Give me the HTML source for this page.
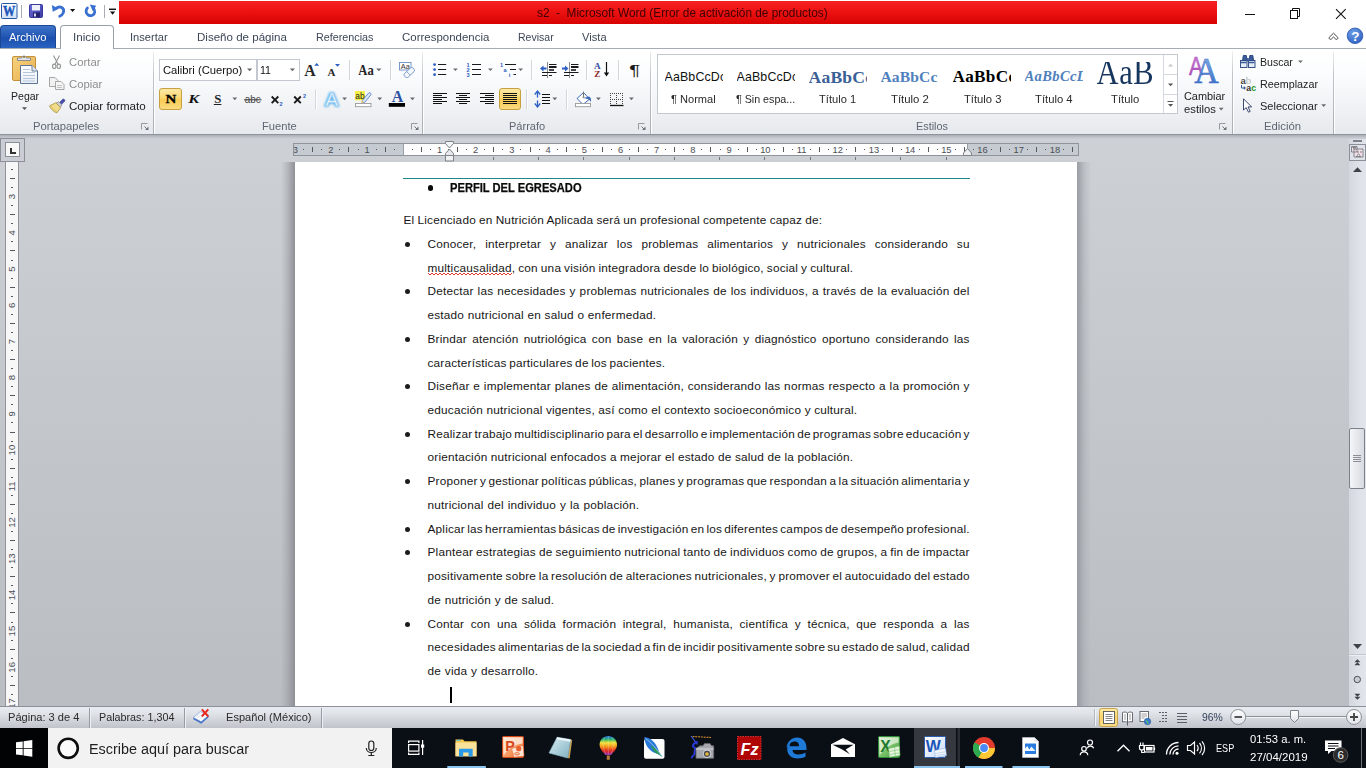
<!DOCTYPE html>
<html lang="es">
<head>
<meta charset="utf-8">
<title>s2 - Microsoft Word</title>
<style>
*{box-sizing:border-box;margin:0;padding:0}
html,body{width:1366px;height:768px;overflow:hidden;background:#fff}
body{font-family:"Liberation Sans",sans-serif;font-size:12px;color:#1e1e1e;position:relative}
.abs{position:absolute}
#ov{position:absolute;left:0;top:0;width:0;height:0;z-index:10}
.gi{position:absolute;top:60px;width:58.500px;height:26px;overflow:hidden;z-index:2}
.gi span{position:absolute;left:0;white-space:pre;line-height:1.2}
.L{position:absolute;white-space:pre;z-index:2;transform-origin:0 0}
svg{position:absolute;overflow:visible}
/* ---------- title bar ---------- */
#titlebar{position:absolute;left:0;top:0;width:1366px;height:25px;background:#fff}
#redband{position:absolute;left:119px;top:1px;width:1098px;height:23px;background:linear-gradient(#f52222,#ee1414 40%,#d80202 100%)}
#title{position:absolute;left:0;top:5px;width:1098px;text-align:center;font-size:12.5px;color:#6b0a0a;white-space:nowrap;letter-spacing:.05px}
/* ---------- tabs ---------- */
#tabs{position:absolute;left:0;top:25px;width:1366px;height:24px;background:#fff}
#tabs .t{position:absolute;top:5px;font-size:12.3px;color:#3a3a3a;white-space:nowrap}
#archivo{position:absolute;left:0;top:0;width:56px;height:23px;border-radius:4px 4px 0 0;background:linear-gradient(#3f74c8,#2458b4 45%,#1c50ae 55%,#2a63c0);border:1px solid #1a4796;border-bottom:none;color:#fff;font-size:12.3px;text-align:center;line-height:22px}
#inicio{position:absolute;left:60px;top:0;width:54px;height:24px;border:1px solid #98a0ab;border-bottom:none;border-radius:4px 4px 0 0;background:#fff;z-index:3}
/* ---------- ribbon ---------- */
#ribbon{position:absolute;left:0;top:48px;width:1366px;height:87px;background:linear-gradient(#ffffff 0,#fbfcfd 30%,#eef0f3 75%,#e6e9ed 100%);border-top:1px solid #a6acb6;border-bottom:1px solid #8f949c}
#ribshadow{position:absolute;left:0;top:135px;width:1366px;height:4px;background:linear-gradient(#a9adb4,#c2c6cc 60%,#cbcfd5)}
.gsep{position:absolute;top:2px;width:1px;height:83px;background:linear-gradient(rgba(190,194,200,.25),#c0c4ca 30%,#a9adb4 100%);box-shadow:1px 0 0 rgba(255,255,255,.95)}
.glabel{position:absolute;top:71px;font-size:12px;color:#6a6f78;text-align:center;white-space:nowrap}
.rt{position:absolute;font-size:12px;white-space:nowrap;color:#1e1e1e}
.dis{color:#8d8d8d}
/* ---------- doc area ---------- */
#docarea{position:absolute;left:0;top:139px;width:1349px;height:567px;background:linear-gradient(#cdd0d5,#c3c6cb 50%,#babdc2)}
#page{position:absolute;left:295px;top:162px;width:782px;height:544px;background:#fff}
#pshl{position:absolute;left:281px;top:162px;width:14px;height:544px;background:linear-gradient(90deg,rgba(140,144,150,0),rgba(140,144,150,.35) 45%,rgba(138,142,148,.95))}
#pshr{position:absolute;left:1077px;top:162px;width:14px;height:544px;background:linear-gradient(90deg,rgba(150,154,160,.95),rgba(160,164,170,.4) 50%,rgba(160,164,170,0))}
/* ---------- status bar ---------- */
#status{position:absolute;left:0;top:706px;width:1366px;height:22px;background:linear-gradient(#e8ebef 0,#e0e3e8 30%,#ced1d7 70%,#c0c3c9 100%);border-top:1px solid #8b909a}
#status .s{position:absolute;top:4px;font-size:12px;color:#2a2a2a;white-space:nowrap}
.ssep{position:absolute;top:1px;width:2px;height:20px;border-left:1px solid #979ba3;border-right:1px solid #eef0f3}
/* ---------- taskbar ---------- */
#taskbar{position:absolute;left:0;top:728px;width:1366px;height:40px;background:#0a0e15}
#search{position:absolute;left:48px;top:0;width:344px;height:40px;background:#f2f2f2}
#search .tx{position:absolute;left:40px;top:11px;font-size:15.5px;color:#222;white-space:nowrap}
.tray{position:absolute;color:#fff;font-size:12px;white-space:nowrap}
.ul{position:absolute;top:38px;height:2px;background:#76b9ed}
/* ---------- scrollbar ---------- */
#vscroll{position:absolute;left:1349px;top:139px;width:17px;height:567px;background:linear-gradient(90deg,#d3d7de,#dfe2e9 60%,#e1e4eb)}
/* ---------- document text ---------- */
.ln{position:absolute;font-size:11.8px;letter-spacing:.2px;line-height:16px;height:16px;color:#161616;white-space:pre;overflow:visible}
.bul{position:absolute;width:5px;height:5px;border-radius:50%;background:#1c1c1c}
.sq{}
#hd{position:absolute;left:450.3px;top:180px;-webkit-text-stroke:.25px #0a0a0a;font-size:12.3px;line-height:16px;font-weight:bold;color:#0a0a0a;white-space:pre;transform:scaleX(0.9070);transform-origin:0 0}
#teal{position:absolute;left:403px;top:178px;width:567px;height:1px;background:#1f8689}
#caret{position:absolute;left:450px;top:687px;width:2px;height:16px;background:#000}
</style>
</head>
<body>
<div id="titlebar">
  <div id="redband"></div>
</div>
<div id="tabs">
  <div id="archivo"></div>
  <div id="inicio"></div>
</div>
<div id="ribbon">
  <div class="gsep" style="left:153px"></div>
  <div class="gsep" style="left:422px"></div>
  <div class="gsep" style="left:650px"></div>
  <div class="gsep" style="left:1232px"></div>
  <div class="gsep" style="left:1333px"></div>
  <!--RIBBON-CONTENT-->
</div>
<div id="ribshadow"></div>
<div id="docarea"></div>
<div id="pshl"></div><div id="pshr"></div>
<div id="page"></div>
<!--RULERS-->
<svg id="hruler" style="left:0;top:139px" width="1349" height="24" viewBox="0 139 1349 24" font-family="'Liberation Sans',sans-serif" font-size="9.3" fill="#4b4f55">
<clipPath id="rc"><rect x="294" y="140" width="790" height="20"/></clipPath>
<rect x="293.5" y="143.5" width="785" height="12" fill="#c6cad1" stroke="#8f939a"/>
<rect x="404" y="144" width="563.5" height="11" fill="#fdfdfe"/>
<line x1="403.5" y1="144" x2="403.5" y2="155" stroke="#9a9ea5"/>
<line x1="967.5" y1="144" x2="967.5" y2="155" stroke="#9a9ea5"/>
<text x="295.3" y="153" text-anchor="middle" clip-path="url(#rc)">3</text>
<text x="330.9" y="153" text-anchor="middle">2</text>
<text x="367.1" y="153" text-anchor="middle">1</text>
<text x="439.5" y="153" text-anchor="middle">1</text>
<text x="475.7" y="153" text-anchor="middle">2</text>
<text x="511.9" y="153" text-anchor="middle">3</text>
<text x="548.1" y="153" text-anchor="middle">4</text>
<text x="584.3" y="153" text-anchor="middle">5</text>
<text x="620.5" y="153" text-anchor="middle">6</text>
<text x="656.7" y="153" text-anchor="middle">7</text>
<text x="692.9" y="153" text-anchor="middle">8</text>
<text x="729.1" y="153" text-anchor="middle">9</text>
<text x="765.3" y="153" text-anchor="middle">10</text>
<text x="801.5" y="153" text-anchor="middle">11</text>
<text x="837.7" y="153" text-anchor="middle">12</text>
<text x="873.9" y="153" text-anchor="middle">13</text>
<text x="910.1" y="153" text-anchor="middle">14</text>
<text x="946.3" y="153" text-anchor="middle">15</text>
<text x="982.5" y="153" text-anchor="middle">16</text>
<text x="1018.7" y="153" text-anchor="middle">17</text>
<text x="1054.9" y="153" text-anchor="middle">18</text>
<path d="M312.5 147v5M348.5 147v5M385.5 147v5M421.5 147v5M457.5 147v5M493.5 147v5M530.5 147v5M566.5 147v5M602.5 147v5M638.5 147v5M674.5 147v5M710.5 147v5M747.5 147v5M783.5 147v5M819.5 147v5M855.5 147v5M892.5 147v5M928.5 147v5M964.5 147v5M1000.5 147v5M1036.5 147v5M1072.5 147v5" stroke="#55595f" stroke-width="1" fill="none"/>
<path d="M303 149.5h1M321 149.5h1M339 149.5h1M358 149.5h1M376 149.5h1M394 149.5h1M412 149.5h1M430 149.5h1M448 149.5h1M466 149.5h1M484 149.5h1M502 149.5h1M520 149.5h1M539 149.5h1M557 149.5h1M575 149.5h1M593 149.5h1M611 149.5h1M629 149.5h1M647 149.5h1M665 149.5h1M683 149.5h1M701 149.5h1M720 149.5h1M738 149.5h1M756 149.5h1M774 149.5h1M792 149.5h1M810 149.5h1M828 149.5h1M846 149.5h1M864 149.5h1M882 149.5h1M901 149.5h1M919 149.5h1M937 149.5h1M955 149.5h1M973 149.5h1M991 149.5h1M1009 149.5h1M1027 149.5h1M1045 149.5h1M1063 149.5h1" stroke="#55595f" stroke-width="1" fill="none"/>
<path d="M493.5 157v3M538.5 157v3M583.5 157v3M629.5 157v3M674.5 157v3M719.5 157v3M764.5 157v3M810.5 157v3M855.5 157v3M900.5 157v3M946.5 157v3" stroke="#73777e" stroke-width="1" fill="none"/>
<g stroke="#7d8188" stroke-width="1" stroke-linejoin="round"><path d="M445.5 141.5h8v2l-4 4.5l-4-4.5z" fill="#f3f4f6"/><path d="M449.5 149l4 4.5v2h-8v-2z" fill="#e6e8eb"/><rect x="445.5" y="155.5" width="8" height="5.5" fill="#eef0f2"/><path d="M963.5 155.5v-2.5l4-4.5l4 4.5v2.5z" fill="#eceef0"/></g>
</svg>
<svg id="vruler" style="left:0;top:160px" width="24" height="546" viewBox="0 160 24 546" font-family="'Liberation Sans',sans-serif" font-size="9.6" fill="#4b4f55">
<rect x="5.5" y="155.5" width="13" height="560" fill="#f7f7f8" stroke="#8f939a"/>
<text transform="translate(15.4 196.7) rotate(-90)" text-anchor="middle">3</text>
<text transform="translate(15.4 232.9) rotate(-90)" text-anchor="middle">4</text>
<text transform="translate(15.4 269.1) rotate(-90)" text-anchor="middle">5</text>
<text transform="translate(15.4 305.3) rotate(-90)" text-anchor="middle">6</text>
<text transform="translate(15.4 341.5) rotate(-90)" text-anchor="middle">7</text>
<text transform="translate(15.4 377.7) rotate(-90)" text-anchor="middle">8</text>
<text transform="translate(15.4 413.9) rotate(-90)" text-anchor="middle">9</text>
<text transform="translate(15.4 450.1) rotate(-90)" text-anchor="middle">10</text>
<text transform="translate(15.4 486.3) rotate(-90)" text-anchor="middle">11</text>
<text transform="translate(15.4 522.5) rotate(-90)" text-anchor="middle">12</text>
<text transform="translate(15.4 558.7) rotate(-90)" text-anchor="middle">13</text>
<text transform="translate(15.4 594.9) rotate(-90)" text-anchor="middle">14</text>
<text transform="translate(15.4 631.1) rotate(-90)" text-anchor="middle">15</text>
<text transform="translate(15.4 667.3) rotate(-90)" text-anchor="middle">16</text>
<text transform="translate(15.4 703.5) rotate(-90)" text-anchor="middle">17</text>
<path d="M10 178.5h5M10 214.5h5M10 250.5h5M10 287.5h5M10 323.5h5M10 359.5h5M10 395.5h5M10 432.5h5M10 468.5h5M10 504.5h5M10 540.5h5M10 576.5h5M10 612.5h5M10 649.5h5M10 685.5h5" stroke="#55595f" stroke-width="1" fill="none"/>
<path d="M11 169.5h2M11 187.5h2M11 205.5h2M11 223.5h2M11 241.5h2M11 260.5h2M11 278.5h2M11 296.5h2M11 314.5h2M11 332.5h2M11 350.5h2M11 368.5h2M11 386.5h2M11 404.5h2M11 422.5h2M11 441.5h2M11 459.5h2M11 477.5h2M11 495.5h2M11 513.5h2M11 531.5h2M11 549.5h2M11 567.5h2M11 585.5h2M11 603.5h2M11 622.5h2M11 640.5h2M11 658.5h2M11 676.5h2M11 694.5h2" stroke="#55595f" stroke-width="1" fill="none"/>
</svg>
<div class="abs" style="left:0;top:138px;width:25px;height:24px;border:1px solid #8b9098;background:#cacdd3"></div>
<div class="abs" style="left:5px;top:142px;width:15px;height:15px;border:1px solid #8b9098;background:#f8f8f9"></div>
<svg style="left:10px;top:148px" width="7" height="7"><path d="M1 0v5h5" stroke="#333" stroke-width="2" fill="none"/></svg>
<!--/RULERS-->
<!--DOCTEXT-->
<div class="ln" style="left:403.5px;top:212px;word-spacing:-0.365px">El Licenciado en Nutrición Aplicada será un profesional competente capaz de:</div>
<div class="ln" style="left:427.5px;top:236px;word-spacing:5.404px">Conocer, interpretar y analizar los problemas alimentarios y nutricionales considerando su</div>
<div class="ln" style="left:427.5px;top:260px;word-spacing:-0.504px"><span class="sq">multicausalidad</span>, con una visión integradora desde lo biológico, social y cultural.</div>
<div class="ln" style="left:427.5px;top:283px;word-spacing:0.451px">Detectar las necesidades y problemas nutricionales de los individuos, a través de la evaluación del</div>
<div class="ln" style="left:427.5px;top:307px;word-spacing:0.179px">estado nutricional en salud o enfermedad.</div>
<div class="ln" style="left:427.5px;top:331px;word-spacing:1.846px">Brindar atención nutriológica con base en la valoración y diagnóstico oportuno considerando las</div>
<div class="ln" style="left:427.5px;top:355px;word-spacing:-0.882px">características particulares de los pacientes.</div>
<div class="ln" style="left:427.5px;top:378px;word-spacing:0.297px">Diseñar e implementar planes de alimentación, considerando las normas respecto a la promoción y</div>
<div class="ln" style="left:427.5px;top:402px;word-spacing:-0.048px">educación nutricional vigentes, así como el contexto socioeconómico y cultural.</div>
<div class="ln" style="left:427.5px;top:426px;word-spacing:-1.324px">Realizar trabajo multidisciplinario para el desarrollo e implementación de programas sobre educación y</div>
<div class="ln" style="left:427.5px;top:449px;word-spacing:-0.049px">orientación nutricional enfocados a mejorar el estado de salud de la población.</div>
<div class="ln" style="left:427.5px;top:473px;word-spacing:-1.091px">Proponer y gestionar políticas públicas, planes y programas que respondan a la situación alimentaria y</div>
<div class="ln" style="left:427.5px;top:497px;word-spacing:0.454px">nutricional del individuo y la población.</div>
<div class="ln" style="left:427.5px;top:521px;word-spacing:-1.293px">Aplicar las herramientas básicas de investigación en los diferentes campos de desempeño profesional.</div>
<div class="ln" style="left:427.5px;top:544px;word-spacing:-0.468px">Plantear estrategias de seguimiento nutricional tanto de individuos como de grupos, a fin de impactar</div>
<div class="ln" style="left:427.5px;top:568px;word-spacing:-0.765px">positivamente sobre la resolución de alteraciones nutricionales, y promover el autocuidado del estado</div>
<div class="ln" style="left:427.5px;top:592px;word-spacing:0.169px">de nutrición y de salud.</div>
<div class="ln" style="left:427.5px;top:616px;word-spacing:3.150px">Contar con una sólida formación integral, humanista, científica y técnica, que responda a las</div>
<div class="ln" style="left:427.5px;top:639px;word-spacing:-1.484px">necesidades alimentarias de la sociedad a fin de incidir positivamente sobre su estado de salud, calidad</div>
<div class="ln" style="left:427.5px;top:663px;word-spacing:0.340px">de vida y desarrollo.</div>
<div class="bul" style="left:405px;top:241.80px"></div>
<div class="bul" style="left:405px;top:288.80px"></div>
<div class="bul" style="left:405px;top:336.80px"></div>
<div class="bul" style="left:405px;top:383.80px"></div>
<div class="bul" style="left:405px;top:431.80px"></div>
<div class="bul" style="left:405px;top:478.80px"></div>
<div class="bul" style="left:405px;top:526.80px"></div>
<div class="bul" style="left:405px;top:549.80px"></div>
<div class="bul" style="left:405px;top:621.80px"></div>
<!--/DOCTEXT-->
<!--SQ--><svg style="left:0;top:0" width="1366" height="300"><path d="M428.0 273.0L430.0 275.0L432.0 273.0L434.0 275.0L436.0 273.0L438.0 275.0L440.0 273.0L442.0 275.0L444.0 273.0L446.0 275.0L448.0 273.0L450.0 275.0L452.0 273.0L454.0 275.0L456.0 273.0L458.0 275.0L460.0 273.0L462.0 275.0L464.0 273.0L466.0 275.0L468.0 273.0L470.0 275.0L472.0 273.0L474.0 275.0L476.0 273.0L478.0 275.0L480.0 273.0L482.0 275.0L484.0 273.0L486.0 275.0L488.0 273.0L490.0 275.0L492.0 273.0L494.0 275.0L496.0 273.0L498.0 275.0L500.0 273.0L502.0 275.0L504.0 273.0L506.0 275.0L508.0 273.0L510.0 275.0L512.0 273.0" fill="none" stroke="#e0332b" stroke-width="1"/></svg><!--/SQ-->
<div id="teal"></div>
<div class="bul" style="left:427.5px;top:185px;width:5.5px;height:5.5px;background:#0a0a0a"></div>
<div id="hd">PERFIL DEL EGRESADO</div>
<div id="caret"></div>

<div id="vscroll"><!--VSCROLL--></div>
<div id="status">
  <div class="ssep" style="left:89px"></div>
  <div class="ssep" style="left:184px"></div>
  <div class="ssep" style="left:321px"></div>
  <!--STATUS-->
</div>
<div id="taskbar">
  <div id="search"></div>
  <!--TASKBAR-->
</div>
<div id="ov">
<!--LABELS-->
<div class="L" style="left:537.3px;top:5px;font-size:12.2px;line-height:16px;transform:scaleX(0.9717);color:#3d0303;">s2&nbsp; -&nbsp; Microsoft Word (Error de activación de productos)</div>
<div class="L" style="left:9.1px;top:30px;font-size:11.2px;line-height:14px;transform:scaleX(1.0023);color:#fff;">Archivo</div>
<div class="L" style="left:73.0px;top:30px;font-size:11.2px;line-height:14px;transform:scaleX(1.0450);color:#3c4656;">Inicio</div>
<div class="L" style="left:129.6px;top:30px;font-size:11.2px;line-height:14px;transform:scaleX(0.9937);color:#3c4656;">Insertar</div>
<div class="L" style="left:196.6px;top:30px;font-size:11.2px;line-height:14px;transform:scaleX(1.0322);color:#3c4656;">Diseño de página</div>
<div class="L" style="left:315.5px;top:30px;font-size:11.2px;line-height:14px;transform:scaleX(0.9631);color:#3c4656;">Referencias</div>
<div class="L" style="left:402.4px;top:30px;font-size:11.2px;line-height:14px;transform:scaleX(1.0246);color:#3c4656;">Correspondencia</div>
<div class="L" style="left:518.3px;top:30px;font-size:11.2px;line-height:14px;transform:scaleX(0.9414);color:#3c4656;">Revisar</div>
<div class="L" style="left:582.3px;top:30px;font-size:11.2px;line-height:14px;transform:scaleX(0.9971);color:#3c4656;">Vista</div>
<div class="L" style="left:10.5px;top:89px;font-size:11.0px;line-height:14px;transform:scaleX(0.9571);color:#222;">Pegar</div>
<div class="L" style="left:68.5px;top:55px;font-size:11.0px;line-height:14px;transform:scaleX(1.0307);color:#8e8e8e;">Cortar</div>
<div class="L" style="left:68.5px;top:77px;font-size:11.0px;line-height:14px;transform:scaleX(1.0276);color:#8e8e8e;">Copiar</div>
<div class="L" style="left:68.5px;top:99px;font-size:11.0px;line-height:14px;transform:scaleX(1.0541);color:#222;">Copiar formato</div>
<div class="L" style="left:33.4px;top:119px;font-size:11.0px;line-height:14px;transform:scaleX(1.0212);color:#5f6672;">Portapapeles</div>
<div class="L" style="left:261.7px;top:119px;font-size:11.0px;line-height:14px;transform:scaleX(1.0161);color:#5f6672;">Fuente</div>
<div class="L" style="left:509.2px;top:119px;font-size:11.0px;line-height:14px;transform:scaleX(1.0006);color:#5f6672;">Párrafo</div>
<div class="L" style="left:915.5px;top:119px;font-size:11.0px;line-height:14px;transform:scaleX(0.9875);color:#5f6672;">Estilos</div>
<div class="L" style="left:1264.4px;top:119px;font-size:11.0px;line-height:14px;transform:scaleX(1.0256);color:#5f6672;">Edición</div>
<div class="L" style="left:162.5px;top:63px;font-size:11.0px;line-height:14px;transform:scaleX(1.0201);color:#111;">Calibri (Cuerpo)</div>
<div class="L" style="left:259.8px;top:63px;font-size:11.0px;line-height:14px;transform:scaleX(0.9631);color:#111;">11</div>
<div class="L" style="left:671.0px;top:92px;font-size:11.0px;line-height:14px;transform:scaleX(1.0063);color:#2a2a2a;">¶ Normal</div>
<div class="L" style="left:735.9px;top:92px;font-size:11.0px;line-height:14px;transform:scaleX(0.9712);color:#2a2a2a;">¶ Sin espa...</div>
<div class="L" style="left:819.2px;top:92px;font-size:11.0px;line-height:14px;transform:scaleX(1.0112);color:#2a2a2a;">Título 1</div>
<div class="L" style="left:891.0px;top:92px;font-size:11.0px;line-height:14px;transform:scaleX(1.0330);color:#2a2a2a;">Título 2</div>
<div class="L" style="left:963.5px;top:92px;font-size:11.0px;line-height:14px;transform:scaleX(1.0221);color:#2a2a2a;">Título 3</div>
<div class="L" style="left:1035.3px;top:92px;font-size:11.0px;line-height:14px;transform:scaleX(1.0249);color:#2a2a2a;">Título 4</div>
<div class="L" style="left:1111.3px;top:92px;font-size:11.0px;line-height:14px;transform:scaleX(1.0249);color:#2a2a2a;">Título</div>
<div class="L" style="left:1183.7px;top:89px;font-size:11.0px;line-height:14px;transform:scaleX(0.9909);color:#222;">Cambiar</div>
<div class="L" style="left:1183.7px;top:102px;font-size:11.0px;line-height:14px;transform:scaleX(1.0228);color:#222;">estilos</div>
<div class="L" style="left:1259.9px;top:55px;font-size:11.0px;line-height:14px;transform:scaleX(0.9606);color:#222;">Buscar</div>
<div class="L" style="left:1259.9px;top:77px;font-size:11.0px;line-height:14px;transform:scaleX(0.9779);color:#222;">Reemplazar</div>
<div class="L" style="left:1259.9px;top:99px;font-size:11.0px;line-height:14px;transform:scaleX(1.0020);color:#222;">Seleccionar</div>
<div class="L" style="left:8.4px;top:710px;font-size:11.0px;line-height:14px;transform:scaleX(1.0063);color:#2b2b2b;">Página: 3 de 4</div>
<div class="L" style="left:99.3px;top:710px;font-size:11.0px;line-height:14px;transform:scaleX(0.9784);color:#2b2b2b;">Palabras: 1,304</div>
<div class="L" style="left:226.3px;top:710px;font-size:11.0px;line-height:14px;transform:scaleX(1.0061);color:#2b2b2b;">Español (México)</div>
<div class="L" style="left:1201.5px;top:710px;font-size:11.0px;line-height:14px;transform:scaleX(0.9441);color:#33415c;">96%</div>
<div class="L" style="left:88.9px;top:739px;font-size:15.3px;line-height:19px;transform:scaleX(0.9408);color:#1f1f1f;">Escribe aquí para buscar</div>
<div class="L" style="left:1215.7px;top:740px;font-size:11.8px;line-height:16px;transform:scaleX(0.7709);color:#fff;">ESP</div>
<div class="L" style="left:1250.0px;top:731px;font-size:11.8px;line-height:16px;transform:scaleX(0.9520);color:#fff;">01:53 a. m.</div>
<div class="L" style="left:1249.6px;top:749px;font-size:11.8px;line-height:16px;transform:scaleX(0.9755);color:#fff;">27/04/2019</div>
<!--/LABELS-->
<!--ICONS1-->
<svg id="rib1" style="left:0;top:0" width="1366" height="140" viewBox="0 0 1366 140">
<defs>
<linearGradient id="gBtn" x1="0" y1="0" x2="0" y2="1"><stop offset="0" stop-color="#fde9a8"/><stop offset=".45" stop-color="#fbd871"/><stop offset=".55" stop-color="#f9cc55"/><stop offset="1" stop-color="#fbdc82"/></linearGradient>
<linearGradient id="gBoard" x1="0" y1="0" x2="1" y2="1"><stop offset="0" stop-color="#f7d27e"/><stop offset="1" stop-color="#e9b04e"/></linearGradient>
<linearGradient id="gPaper" x1="0" y1="0" x2="0" y2="1"><stop offset="0" stop-color="#ffffff"/><stop offset="1" stop-color="#e8eef7"/></linearGradient>
<filter id="glow" x="-30%" y="-30%" width="160%" height="160%"><feGaussianBlur stdDeviation="1.1"/></filter>
</defs>
<!-- ===== Pegar (clipboard) ===== -->
<rect x="12.5" y="56.5" width="23" height="24" rx="1.5" fill="url(#gBoard)" stroke="#c4913a"/>
<path d="M17.5 60.5v-2.5h4.200c0-2.600 4.600-2.600 4.600 0h4.200v2.500z" fill="#e4e6ea" stroke="#7f8690" stroke-width=".9"/>
<circle cx="24" cy="57" r=".9" fill="#8a6a2a"/>
<path d="M20.500 65.500h11.500l5.500 5.500v12.500h-17z" fill="url(#gPaper)" stroke="#5f7594"/>
<path d="M32 65.500v5.500h5.500" fill="#dfe7f2" stroke="#5f7594" stroke-width=".9"/>
<path d="M23 69.500h7M23 72.500h12M23 75.500h12M23 78.500h12M23 81h12" stroke="#b9c7dc" stroke-width="1"/>
<path d="M22 107.200h5l-2.500 2.700z" fill="#555"/>
<!-- scissors (disabled) -->
<g stroke="#9a9a9a" fill="none" stroke-width="1.2">
<path d="M53.500 55.500l4.800 9.200M59.500 55.500l-4.800 9.200"/>
<ellipse cx="54.200" cy="66.300" rx="1.700" ry="2.200"/><ellipse cx="58.800" cy="66.300" rx="1.700" ry="2.200"/>
</g>
<!-- copy (disabled) -->
<g stroke="#a6a6a6" fill="#f1f1f1" stroke-width="1">
<path d="M49.500 77.500h5.500l3 3v6h-8.500z"/><path d="M55.500 81.500h5.500l3 3v5h-8.500z" fill="#f6f6f6"/>
<path d="M57 85.500h5M57 87.500h5" stroke="#c2c2c2"/>
</g>
<!-- format painter brush -->
<path d="M58.500 103.500l4.200-4.200c1-.9 2.800.8 1.900 1.900l-4.200 4.200z" fill="#4a50b0" stroke="#35388a" stroke-width=".6"/>
<path d="M55.600 103.200l3.400-1.500 2.800 2.800-1.500 3.400z" fill="#c9ccd2" stroke="#777" stroke-width=".6"/>
<path d="M49.500 105.800l6.300-3 4.800 4.800-3.600 5.200c-3-.5-6.300-3.600-7.500-7z" fill="#f0dc8a" stroke="#a8923c" stroke-width=".8"/>
<path d="M51.500 106.500c1.500 2.500 3.200 4 5.200 4.800" stroke="#d3b95a" stroke-width=".8" fill="none"/>
<!-- launcher icons -->
<g id="lnch" stroke="#959aa2" fill="none" stroke-width="1"><path d="M141.500 129.500v-6h6"/><path d="M144.500 126.500l3 3" stroke="#6f747c"/><path d="M148.500 126.500v3.500h-3.500z" fill="#6f747c" stroke="none"/></g>
<use href="#lnch" x="270"/><use href="#lnch" x="497"/><use href="#lnch" x="1078"/>
<!-- ===== Fuente ===== -->
<rect x="159.500" y="59.500" width="97" height="21" fill="#fff" stroke="#c3c8d0"/>
<rect x="257.500" y="59.500" width="42" height="21" fill="#fff" stroke="#c3c8d0"/>
<path id="dd" d="M247 68.500h5.200l-2.600 2.800z" fill="#6a6a6a"/>
<use href="#dd" x="42.800"/>
<g font-family="'Liberation Serif',serif" font-weight="bold" fill="#262626">
<text x="304.300" y="75.600" font-size="15.800">A</text>
<text x="327.600" y="75.600" font-size="11">A</text>
<text x="358.300" y="74.600" font-size="13.600" textLength="15.400" lengthAdjust="spacingAndGlyphs">Aa</text>
</g>
<path d="M314.200 65.700l2.500-2.700 2.500 2.700z" fill="#2b5fc4"/>
<path d="M335 64l5 0-2.500 2.800z" fill="#2b5fc4"/>
<path d="M349.500 60v20M390.500 60v20M315.500 89.500v20" stroke="#d3d6db"/>
<path d="M350.500 60v20M391.500 60v20M316.500 89.500v20" stroke="#fff"/>
<use href="#dd" x="129.200"/>
<!-- clear formatting -->
<rect x="399.500" y="62.500" width="11.500" height="7.500" fill="#fff" stroke="#6d8fc6" stroke-width=".9"/>
<text x="400.800" y="68.800" font-family="'Liberation Sans',sans-serif" font-size="6.500" fill="#333" textLength="9" lengthAdjust="spacingAndGlyphs">Aa</text>
<path d="M404.500 73.500l6-5.500c1.800-1.500 5.200 1.600 3.500 3.600l-5.800 5.600c-2 1.500-5.500-1.700-3.700-3.700z" fill="#f4f8fd" stroke="#6d8fc6" stroke-width=".9"/>
<path d="M406.700 71.600l3.700 3.700" stroke="#6d8fc6" stroke-width=".8"/>
<!-- row 2: N K S abc x2 x2 -->
<rect x="159.500" y="88.500" width="22" height="21" rx="2.500" fill="url(#gBtn)" stroke="#c7a041"/>
<text x="165.500" y="102.700" font-family="'Liberation Serif',serif" font-weight="bold" font-size="12.800" fill="#000" textLength="10.800" lengthAdjust="spacingAndGlyphs" stroke="#000" stroke-width=".3">N</text>
<text x="188.300" y="102.700" font-family="'Liberation Serif',serif" font-weight="bold" font-style="italic" font-size="12.800" fill="#111" textLength="11" lengthAdjust="spacingAndGlyphs">K</text>
<text x="214.200" y="102.700" font-family="'Liberation Serif',serif" font-weight="bold" font-size="12.800" fill="#222">S</text>
<path d="M213.800 104.500h7.600" stroke="#222" stroke-width="1"/>
<path d="M232.400 97.600h4.800l-2.400 2.600z" fill="#6a6a6a"/>
<text x="244.800" y="103" font-family="'Liberation Sans',sans-serif" font-size="10.500" fill="#4a4a4a" textLength="16" lengthAdjust="spacingAndGlyphs">abc</text>
<path d="M244 99.800h17.500" stroke="#3a3a3a" stroke-width="1"/>
<g stroke="#1a1a1a" stroke-width="1.900" fill="none"><path d="M271.700 96.500l6.600 6.600M278.300 96.500l-6.600 6.600"/><path d="M294.200 96.500l6.600 6.600M300.800 96.500l-6.600 6.600"/></g>
<text x="279.600" y="105.600" font-family="'Liberation Sans',sans-serif" font-weight="bold" font-size="5.500" fill="#2b5fc4">2</text>
<text x="303" y="97.500" font-family="'Liberation Sans',sans-serif" font-weight="bold" font-size="5.500" fill="#2b5fc4">2</text>
<!-- text effects A -->
<text x="324.600" y="106" font-family="'Liberation Sans',sans-serif" font-size="19" font-weight="bold" fill="#5db4f0" stroke="#5db4f0" stroke-width="1.600" filter="url(#glow)" textLength="14.500" lengthAdjust="spacingAndGlyphs">A</text>
<text x="325.600" y="105.500" font-family="'Liberation Sans',sans-serif" font-size="17.500" fill="#ffffff" stroke="#9fd0f2" stroke-width=".7" textLength="12.500" lengthAdjust="spacingAndGlyphs">A</text>
<path d="M342.200 97.600h4.800l-2.400 2.600z" fill="#6a6a6a"/>
<!-- highlight -->
<rect x="355" y="91" width="10" height="9.300" fill="#f5f048"/>
<text x="355.300" y="98.800" font-family="'Liberation Sans',sans-serif" font-size="9" fill="#1a1a1a" textLength="9.300" lengthAdjust="spacingAndGlyphs">ab</text>
<path d="M362.500 100.500l6.200-7.500c1-.9 2.900.5 2.200 1.700l-6 7.500-2.800.8z" fill="#dce9fb" stroke="#4a74c0" stroke-width=".8"/>
<path d="M361.700 100.200l2.600 2-3.200.9z" fill="#e9c97a"/>
<rect x="355.500" y="103.500" width="15.500" height="3.200" fill="#fff" stroke="#9a9a9a" stroke-width=".9"/>
<path d="M377.300 97.600h4.800l-2.400 2.600z" fill="#6a6a6a"/>
<!-- font color -->
<text x="391.800" y="102" font-family="'Liberation Serif',serif" font-weight="bold" font-size="15.800" fill="#2d4fa0" textLength="11.500" lengthAdjust="spacingAndGlyphs">A</text>
<rect x="388.800" y="103" width="16.200" height="3.800" fill="#000"/>
<path d="M410 97.600h4.800l-2.400 2.600z" fill="#6a6a6a"/>
</svg>
<!--/ICONS1-->
<!--ICONS2-->
<svg id="rib2" style="left:0;top:0" width="1366" height="140" viewBox="0 0 1366 140">
<defs>
<path id="dd2" d="M0 0h4.800l-2.400 2.600z" fill="#6a6a6a"/>
<linearGradient id="gBtn2" x1="0" y1="0" x2="0" y2="1"><stop offset="0" stop-color="#fde9a8"/><stop offset=".45" stop-color="#fbd871"/><stop offset=".55" stop-color="#f9cc55"/><stop offset="1" stop-color="#fbdc82"/></linearGradient>
<linearGradient id="gA1" x1="0" y1="0" x2="0" y2="1"><stop offset="0" stop-color="#8fb6ea"/><stop offset="1" stop-color="#2f66c4"/></linearGradient>
<linearGradient id="gA2" x1="0" y1="0" x2="0" y2="1"><stop offset="0" stop-color="#d58ad8"/><stop offset="1" stop-color="#9a3fb0"/></linearGradient>
</defs>
<!-- ===== Parrafo row 1 ===== -->
<g fill="#2b5fc4"><circle cx="434.600" cy="64.600" r="1.400"/><circle cx="434.600" cy="69.600" r="1.400"/><circle cx="434.600" cy="74.700" r="1.400"/></g>
<path d="M438 64.500h8.200M438 69.500h8.200M438 74.500h8.200" stroke="#1a1a1a" stroke-width="1"/>
<use href="#dd2" x="453" y="68.500"/>
<g font-family="'Liberation Sans',sans-serif" font-weight="bold" font-size="5.600" fill="#2b5fc4"><text x="466.600" y="66.600">1</text><text x="466.600" y="71.700">2</text><text x="466.600" y="76.800">3</text></g>
<path d="M472 64.500h9M472 69.500h9M472 74.500h9" stroke="#1a1a1a" stroke-width="1"/>
<use href="#dd2" x="488" y="68.500"/>
<g font-family="'Liberation Sans',sans-serif" font-weight="bold" font-size="5.600" fill="#2b5fc4"><text x="500" y="66.600">1</text><text x="503.600" y="72">a</text><text x="508.800" y="77.300">i</text></g>
<path d="M505 64.500h11M510 69.500h6M513.500 74.500h2.500" stroke="#1a1a1a" stroke-width="1"/>
<use href="#dd2" x="518.300" y="68.500"/>
<path d="M531.500 60v20M586.500 60v20M618.500 60v20M526.500 89.500v20M566.500 89.500v20" stroke="#d3d6db"/>
<path d="M532.500 60v20M587.500 60v20M619.500 60v20M527.500 89.500v20M567.500 89.500v20" stroke="#fff"/>
<!-- decrease indent -->
<g id="ind">
<path d="M547.500 62.500v15" stroke="#1a1a1a" stroke-width="1" stroke-dasharray="1 1"/>
<path d="M549 64.500h7.500M542 72.500h14.500M542 75.500h5M549 75.500h3" stroke="#1a1a1a" stroke-width="1"/>
<path d="M549 67h7.500" stroke="#1a1a1a" stroke-width="2"/>
<path d="M549 70h5" stroke="#1a1a1a" stroke-width="1.600"/>
</g>
<path d="M540 68.500l3.500-3v2h3v2h-3v2z" fill="#2b5fc4"/>
<use href="#ind" x="22"/>
<path d="M568.500 68.500l-3.500-3v2h-3v2h3v2z" fill="#2b5fc4"/>
<!-- sort -->
<text x="594" y="68.600" font-family="'Liberation Serif',serif" font-weight="bold" font-size="9.200" fill="#2d4fa0">A</text>
<text x="594.200" y="76.800" font-family="'Liberation Serif',serif" font-weight="bold" font-size="9.200" fill="#8a2a2a">Z</text>
<path d="M606.500 62v12" stroke="#111" stroke-width="1.200"/><path d="M603.800 72.500h5.400l-2.700 4z" fill="#111"/>
<!-- pilcrow -->
<text x="629.300" y="75.300" font-family="'Liberation Sans',sans-serif" font-size="14.500" fill="#1a1a1a" textLength="10.800" lengthAdjust="spacingAndGlyphs">¶</text>
<!-- ===== row 2 ===== -->
<path d="M433 93.500h14M433 95.500h9M433 97.500h14M433 99.500h9M433 101.500h14M433 103.500h9" stroke="#111" stroke-width="1"/>
<path d="M456 93.500h14M459 95.500h8M456 97.500h14M459 99.500h8M456 101.500h14M459 103.500h8" stroke="#111" stroke-width="1"/>
<path d="M480 93.500h14M485 95.500h9M480 97.500h14M485 99.500h9M480 101.500h14M485 103.500h9" stroke="#111" stroke-width="1"/>
<rect x="499.500" y="88.500" width="21" height="21" rx="2.500" fill="url(#gBtn2)" stroke="#c7a041"/>
<path d="M503 93.500h14M503 95.500h14M503 97.500h14M503 99.500h14M503 101.500h14M503 103.500h14" stroke="#111" stroke-width="1"/>
<!-- line spacing -->
<path d="M537.500 92v5.500M537.500 100.500v5.500" stroke="#2b5fc4" stroke-width="1.300"/><path d="M534.800 94.500l2.700-3.500 2.700 3.500M534.800 103.500l2.700 3.500 2.700-3.500" stroke="#2b5fc4" stroke-width="1.300" fill="none"/>
<path d="M542 94.500h8M542 97.500h8M542 100.500h8M542 103.500h8" stroke="#111" stroke-width="1"/>
<use href="#dd2" x="552.400" y="97.600"/>
<!-- shading bucket -->
<path d="M577 98.500l6.500-6 6 6.500-6.500 5.500z" fill="#fff" stroke="#3d68b8" stroke-width="1"/>
<path d="M583.500 98l5.500-1.500c2 .8 2.500 3.500 1.800 5.500-.8-1.800-1.800-2.800-3.300-3z" fill="#3d68b8"/>
<path d="M583.500 91.500v5.500" stroke="#777" stroke-width="1"/><circle cx="583.500" cy="97.300" r="1" fill="#888"/>
<rect x="575.500" y="103.500" width="15" height="3.200" fill="#fff" stroke="#9a9a9a" stroke-width=".9"/>
<use href="#dd2" x="596" y="97.600"/>
<!-- borders -->
<g stroke="#444" stroke-width="1" stroke-dasharray="1 1"><path d="M610 93.500h13.500M610 99.500h13.500M610.500 93v12M616.500 93v12M622.500 93v12"/></g>
<path d="M610 105.500h13.500" stroke="#111" stroke-width="1.300"/>
<use href="#dd2" x="629" y="97.600"/>
<!-- ===== Estilos gallery ===== -->
<rect x="657.500" y="54.500" width="520" height="59" fill="#fff" stroke="#c3c7ce"/>
<path d="M1163.500 55v58" stroke="#d5d8de"/>
<path d="M1164 74.500h13M1164 94.500h13" stroke="#d5d8de"/>
<path d="M1168 66.500l2.600-2.800 2.600 2.800z" fill="#c4c7cc"/>
<path d="M1168 83.500h5.200l-2.600 2.800z" fill="#555"/>
<path d="M1167.500 101.500h6" stroke="#555"/><path d="M1168 104h5.200l-2.600 2.800z" fill="#555"/>
<!-- cambiar estilos icon -->
<text x="1189" y="74.600" font-family="'Liberation Sans',sans-serif" font-size="26" fill="url(#gA2)" stroke="#a94cc0" stroke-width=".4" textLength="13.800" lengthAdjust="spacingAndGlyphs">A</text>
<text x="1194.300" y="82.800" font-family="'Liberation Serif',serif" font-size="36" fill="url(#gA1)" stroke="#3a6cc6" stroke-width=".5" textLength="24.500" lengthAdjust="spacingAndGlyphs">A</text>
<use href="#dd2" x="1218.800" y="107.800"/>
<!-- ===== Edicion ===== -->
<g stroke="#27427a" stroke-width=".9">
<path d="M1242.500 60.500l.8-5h3l.8 5zM1249 60.500l.8-5h3l.8 5z" fill="#3a5c9c"/>
<rect x="1240.500" y="60.500" width="6.500" height="7" fill="#e4ecf8"/><rect x="1248.500" y="60.500" width="6.500" height="7" fill="#e4ecf8"/>
<path d="M1241 62.500h5.500M1249 62.500h5.500" stroke="#3a5c9c" stroke-width="1.600"/>
<rect x="1246.800" y="58" width="2" height="3.500" fill="#3a5c9c" stroke="none"/>
</g>
<use href="#dd2" x="1298" y="60.500"/>
<text x="1240.500" y="84" font-size="9.500" font-family="'Liberation Sans',sans-serif" font-weight="bold" fill="#4a4a4a">a<tspan font-family="'Liberation Serif',serif" font-weight="normal" fill="#b4b4b4" font-size="10.500">b</tspan></text>
<text x="1246.300" y="90.800" font-family="'Liberation Sans',sans-serif" font-weight="bold" font-size="9" fill="#333" textLength="9.800" lengthAdjust="spacingAndGlyphs">a<tspan fill="#1f9a1f">c</tspan></text>
<path d="M1241.500 85v3h3" stroke="#3a5c9c" stroke-width="1" fill="none"/><path d="M1243.800 86l2.200 2-2.200 2z" fill="#3a5c9c"/>
<path d="M1243.500 98.800v11.200l2.700-2.400 2.300 4.600 1.700-.8-2.200-4.500h3.600z" fill="#fff" stroke="#26365e" stroke-width=".9" stroke-linejoin="round"/>
<use href="#dd2" x="1321.300" y="104.300"/>
</svg>
<!--/ICONS2-->
<!--ICONS3-->
<svg id="top" style="left:0;top:0" width="1366" height="50" viewBox="0 0 1366 50">
<defs>
<linearGradient id="gW" x1="0" y1="0" x2="0" y2="1"><stop offset="0" stop-color="#ffffff"/><stop offset="1" stop-color="#cfe0f7"/></linearGradient>
<radialGradient id="gHelp" cx=".4" cy=".3" r=".8"><stop offset="0" stop-color="#6f9fe8"/><stop offset="1" stop-color="#2a5ec2"/></radialGradient>
<linearGradient id="gSave" x1="0" y1="0" x2="1" y2="1"><stop offset="0" stop-color="#6f6fd8"/><stop offset="1" stop-color="#3a3aa8"/></linearGradient>
</defs>
<!-- word icon -->
<rect x="1.500" y="3.500" width="15.500" height="15" rx=".8" fill="url(#gW)" stroke="#2a58a6"/>
<text x="3" y="16.400" font-family="'Liberation Serif',serif" font-weight="bold" font-size="14.500" fill="#1c55b8" stroke="#1c55b8" stroke-width=".45" textLength="12.300" lengthAdjust="spacingAndGlyphs">W</text>
<path d="M21.500 5v13M104.500 5v13" stroke="#a9acb2"/>
<!-- save -->
<rect x="29.500" y="4.500" width="13" height="13" rx="1" fill="url(#gSave)" stroke="#3a3a9c"/>
<rect x="32" y="5" width="8" height="5.500" fill="#eef0fa"/>
<rect x="33" y="12.500" width="7" height="4.500" fill="#23236e"/><rect x="34" y="13.500" width="2" height="3" fill="#dcdcf5"/>
<!-- undo -->
<path d="M55.500 8.800c4.500-3.800 9.500-.8 7.800 4-.8 1.900-2 2.900-3.600 3.500" fill="none" stroke="#3a70d0" stroke-width="2.800" stroke-linecap="round"/>
<path d="M51.900 5l.8 6.800 6-3z" fill="#3a70d0"/>
<path d="M70 9h5.200l-2.600 2.900z" fill="#111"/>
<!-- redo -->
<path d="M93.200 8c2.300 2.400 2 6-.8 7.300-2.900 1.200-6.300-.7-6.300-4 0-1.300.5-2.400 1.300-3.200" fill="none" stroke="#3a70d0" stroke-width="2.800" stroke-linecap="round"/>
<path d="M89.800 4.500l6.500 1.300-3.500 5.300z" fill="#3a70d0"/>
<!-- customize -->
<path d="M109 9.300h7" stroke="#111" stroke-width="1.500"/><path d="M110 11.600h5.200l-2.600 3.200z" fill="#111"/>
<!-- window controls -->
<path d="M1245 14.500h10" stroke="#111" stroke-width="1"/>
<rect x="1290.500" y="10.500" width="7" height="8" fill="none" stroke="#111" stroke-width="1"/>
<path d="M1292.500 10.500v-2h7v8h-2" fill="none" stroke="#111" stroke-width="1"/>
<path d="M1336 9.200l9.700 9.700M1345.700 9.200l-9.700 9.700" stroke="#111" stroke-width="1.100"/>
<!-- ribbon minimize caret -->
<path d="M1333.500 33.200l4.300 4.200c.5 1.600-1 2.300-2 1.800l-2.300-2.200-2.300 2.200c-1 .5-2.500-.2-2-1.800z" fill="#fff" stroke="#333" stroke-width=".9" stroke-linejoin="round"/>
<!-- help -->
<circle cx="1355" cy="35.800" r="7.800" fill="url(#gHelp)" stroke="#2a55a8" stroke-width=".8"/>
<text x="1351.200" y="40.600" font-family="'Liberation Sans',sans-serif" font-weight="bold" font-size="13.500" fill="#fff">?</text>
</svg>
<!--/ICONS3-->
<!--GALLERY-->
<div class="gi" style="left:664.500px"><span style="font-size:12.4px;color:#111;top:10.400px;letter-spacing:.15px">AaBbCcDc</span></div>
<div class="gi" style="left:736.500px"><span style="font-size:12.4px;color:#111;top:10.400px;letter-spacing:.15px">AaBbCcDc</span></div>
<div class="gi" style="left:808.500px"><span style="font-family:'Liberation Serif',serif;font-weight:bold;font-size:17.6px;color:#3a6096;top:6.600px;letter-spacing:.2px">AaBbCc</span></div>
<div class="gi" style="left:880.500px"><span style="font-family:'Liberation Serif',serif;font-weight:bold;font-size:15.6px;color:#4f81bd;top:8px;letter-spacing:.1px">AaBbCc</span></div>
<div class="gi" style="left:952.500px"><span style="font-family:'Liberation Serif',serif;font-weight:bold;font-size:17.2px;color:#000;top:7px;letter-spacing:.3px">AaBbCc</span></div>
<div class="gi" style="left:1024.500px"><span style="font-family:'Liberation Serif',serif;font-weight:bold;font-style:italic;font-size:14.6px;color:#4f81bd;top:8.400px;letter-spacing:.35px">AaBbCcDd</span></div>
<div class="gi" style="left:1096.500px;top:62px;height:24px"><span style="font-family:'Liberation Serif',serif;font-size:30.5px;color:#17365d;top:-6.300px;letter-spacing:.6px;transform:scaleY(1.2);transform-origin:0 27px">AaBb</span></div>
<!--/GALLERY-->
<!--ICONS4-->
<svg id="bot" style="left:0;top:700px" width="1366" height="68" viewBox="0 700 1366 68">
<defs>
<linearGradient id="gSel" x1="0" y1="0" x2="0" y2="1"><stop offset="0" stop-color="#fdeaa6"/><stop offset=".5" stop-color="#fad468"/><stop offset="1" stop-color="#fbdf8e"/></linearGradient>
<linearGradient id="gCirc" x1="0" y1="0" x2="0" y2="1"><stop offset="0" stop-color="#ffffff"/><stop offset="1" stop-color="#dfe2e8"/></linearGradient>
<linearGradient id="gBal" x1="0" y1="0" x2="0" y2="1"><stop offset="0" stop-color="#2a6ae0"/><stop offset=".18" stop-color="#2fb56a"/><stop offset=".36" stop-color="#f4e23a"/><stop offset=".55" stop-color="#f59a1e"/><stop offset=".78" stop-color="#e3281e"/><stop offset="1" stop-color="#8a2ab0"/></linearGradient>
<linearGradient id="gPP" x1="0" y1="0" x2="1" y2="1"><stop offset="0" stop-color="#fbd2b2"/><stop offset=".55" stop-color="#f59a62"/><stop offset="1" stop-color="#ea6a2c"/></linearGradient>
<linearGradient id="gXL" x1="0" y1="0" x2="1" y2="1"><stop offset="0" stop-color="#c8e6c0"/><stop offset=".5" stop-color="#7cc36a"/><stop offset="1" stop-color="#3a9a44"/></linearGradient>
<linearGradient id="gWD" x1="0" y1="0" x2="1" y2="1"><stop offset="0" stop-color="#ffffff"/><stop offset="1" stop-color="#c9dbf5"/></linearGradient>
<linearGradient id="gNP" x1="0" y1="0" x2="1" y2="1"><stop offset="0" stop-color="#d8eef4"/><stop offset="1" stop-color="#7fb0c0"/></linearGradient>
</defs>
<!-- ===== status bar icons ===== -->
<!-- proofing -->
<path d="M193.300 717.500l7-6 8.200 4-7.300 6.300z" fill="#fbfcfe" stroke="#7f9fd6" stroke-width=".7"/>
<path d="M193.300 717.500v1.800l7.900 4.500 7.300-6.300v-2l-7.300 6.300z" fill="#4a76c8"/>
<path d="M195.500 717.300l5.500-4.600M197.300 718.300l5.500-4.600M199.200 719.300l5.500-4.600" stroke="#c9d6ee" stroke-width=".6"/>
<path d="M201.800 709.300l6.500 7.200M208.300 709.300l-6.500 7.200" stroke="#e8281e" stroke-width="1.900"/>
<!-- view buttons -->
<path d="M1094.500 709v17" stroke="#b5b9c0"/><path d="M1095.500 709v17" stroke="#f3f4f6"/>
<rect x="1099.500" y="708.500" width="18" height="18" rx="2" fill="url(#gSel)" stroke="#c9a44a"/>
<rect x="1103.500" y="711.500" width="11" height="12" fill="#fff" stroke="#555" stroke-width=".9"/>
<path d="M1105.500 714.500h7M1105.500 716.500h7M1105.500 718.500h7M1105.500 720.500h7" stroke="#777" stroke-width=".9"/>
<g stroke="#5a5e66" stroke-width=".9" fill="#fdfdfd"><path d="M1122.500 712.500c2-.8 3.500-.6 5 .6v9.500c-1.500-1-3-1.200-5-.6zM1132.500 712.500c-2-.8-3.500-.6-5 .6v9.500c1.500-1 3-1.200 5-.6z"/></g>
<path d="M1124 715h2M1124 717h2M1124 719h2M1129 715h2M1129 717h2M1129 719h2" stroke="#888" stroke-width=".8"/>
<path d="M1127.500 723v2.500" stroke="#5a5e66"/>
<rect x="1140" y="711.500" width="8.500" height="10" fill="#fdfdfd" stroke="#5a5e66" stroke-width=".9"/>
<path d="M1141.500 714h5.500M1141.500 716h5.500M1141.500 718h3" stroke="#888" stroke-width=".8"/>
<circle cx="1147.500" cy="721.500" r="3.200" fill="#3a7bd0" stroke="#2a5a9a" stroke-width=".6"/><path d="M1146 720.500c1 .5 2 1.800 1.800 3.500" stroke="#5ec15e" stroke-width="1.200" fill="none"/>
<path d="M1159 712.500h9M1162 715.500h6M1162 718.500h6M1159 721.500h9" stroke="#5a5e66" stroke-width="1" stroke-dasharray="2 1"/>
<path d="M1177 713.500h10M1177 716.500h10M1177 719.500h10M1177 722.500h10" stroke="#5a5e66" stroke-width="1"/>
<!-- zoom slider -->
<path d="M1246 716.500h100" stroke="#8d9199"/><path d="M1246 717.500h100" stroke="#f3f4f6"/>
<circle cx="1238.200" cy="717" r="7.500" fill="url(#gCirc)" stroke="#8d9199"/>
<path d="M1234.500 717h7.500" stroke="#444" stroke-width="1.800"/>
<circle cx="1354" cy="717" r="7.500" fill="url(#gCirc)" stroke="#8d9199"/>
<path d="M1350 717h8M1354 713v8" stroke="#444" stroke-width="1.800"/>
<path d="M1290.500 710.500h8v8l-4 4-4-4z" fill="url(#gCirc)" stroke="#7d8189"/>
<!-- ===== taskbar ===== -->
<rect x="0" y="728" width="48" height="40" fill="#020305"/>
<path d="M16 742.300l6.700-.9v6.500h-6.700zM23.600 741.300l8.700-1.300v7.900h-8.700zM16 748.800h6.700v6.500l-6.700-.9zM23.600 748.800h8.700v7.900l-8.700-1.300z" fill="#fff"/>
<circle cx="68.200" cy="748.300" r="9.600" fill="#fbfbfb" stroke="#0e0e0e" stroke-width="2.600"/>
<!-- mic -->
<rect x="368.800" y="741" width="5" height="9.500" rx="2.500" fill="none" stroke="#222" stroke-width="1.200"/>
<path d="M366.300 748c0 6 10 6 10 0M371.300 752.500v3M368.300 755.500h6" fill="none" stroke="#222" stroke-width="1.200"/>
<!-- task view -->
<g stroke="#fff" stroke-width="1.200" fill="none"><rect x="408.600" y="744.600" width="10.300" height="6.500"/><path d="M408.600 743v-1.800h10.300v1.800M408.600 752.500v1.800h10.300v-1.800M422.600 740v15"/></g>
<rect x="421" y="744.500" width="3.200" height="3.200" fill="#fff"/>
<!-- explorer -->
<path d="M455.500 739.500h7.500l1.500 1.800h12v15h-21z" fill="#f4c64a"/>
<path d="M455.500 742.500h21v13.800h-21z" fill="#fbe29a"/>
<path d="M456.500 740.300h4" stroke="#4ac8e8" stroke-width="1"/>
<path d="M459 748.700h13.700v7.700h-4.200v-3.900h-5.300v3.900h-4.200z" fill="#2a9ae8"/>
<rect x="447.300" y="766" width="38.600" height="2" fill="#8cc4f0"/>
<!-- powerpoint -->
<rect x="502.500" y="736.500" width="21" height="21" rx="1" fill="url(#gPP)" stroke="#d0481a" stroke-width="1"/>
<path d="M503.500 737.500h19v6c-8 1-14 5-19 12z" fill="#fff3e8" opacity=".75"/>
<text x="505.300" y="751" font-family="'Liberation Sans',sans-serif" font-weight="bold" font-size="15.500" fill="#d8481a" textLength="9.500" lengthAdjust="spacingAndGlyphs">P</text>
<path d="M511.500 748.500l11.500-3 1 10.500-10 1.200z" fill="#fbe6d8" stroke="#e8703a" stroke-width=".6"/>
<circle cx="518.700" cy="748.700" r="2.600" fill="#e8602a"/><ellipse cx="517" cy="753.800" rx="2.600" ry="1.100" fill="none" stroke="#e8602a" stroke-width=".9"/>
<!-- notepad -->
<path d="M570.600 739.500l1.600.6-2.600 18.500-1.900-.6z" fill="#c9a050"/>
<path d="M557.100 737.200l13.500 2.300-2.900 18.500-18.700-5z" fill="url(#gNP)" stroke="#8fb8c8" stroke-width=".6"/>
<path d="M557.100 737.200l13.500 2.300-.4 2.200-13.800-2.400z" fill="#eef6f9"/>
<!-- balloon -->
<path d="M608.300 736c5 0 8.700 3.800 8.700 8.800 0 4.200-3.500 7.500-6.200 10.200h-5c-2.700-2.700-6.200-6-6.200-10.200 0-5 3.700-8.800 8.700-8.800z" fill="url(#gBal)"/>
<path d="M604.500 737.500c-2 4-2 10 1.300 17.500M612 737.500c2 4 2 10-1.300 17.500M608.300 736v19" stroke="rgba(255,255,255,.28)" stroke-width=".8" fill="none"/>
<rect x="606.800" y="755.500" width="3" height="4.300" fill="#b9793a"/>
<!-- feather on white -->
<rect x="644" y="739" width="20.500" height="19.700" rx="2" fill="#fff"/>
<path d="M644.300 737c6.500.5 12.500 6 15 15.500l3 4.200-4.500-2.800c-8-2-13-8-13.500-16.900z" fill="#2a78d8"/>
<path d="M651 745c3 2 6.500 5.500 8.300 7.500l3 4.200-4.500-2.800c-3-1-5.500-4.500-6.800-8.900z" fill="#2a9a58"/>
<path d="M645.500 738.500c5 3.500 10 9 16.500 18" stroke="#bfe0f5" stroke-width=".7" fill="none"/>
<!-- camera + archer -->
<path d="M692.500 736.500l18.500 1" stroke="#d08a2a" stroke-width="1.100" stroke-dasharray="2 .8"/>
<path d="M691 736l6.500 8.500" stroke="#3a5ae0" stroke-width="1.200"/>
<path d="M697 742c-2.500 1-4.300 2.500-4 4.500l2 1.500-.5 6-2.800 3.500" stroke="#2a3ad8" stroke-width="1.900" fill="none" stroke-linecap="round"/>
<path d="M700 745.800h3l1.500-2.300h5.500l1.500 2.300h2.200v12.500h-17.700v-10z" fill="#a4a7ad" stroke="#63666c" stroke-width=".8"/>
<path d="M696 749h17.700" stroke="#d6d8dc" stroke-width="1"/>
<circle cx="707" cy="753.800" r="3.800" fill="#4a4d53" stroke="#d8dade" stroke-width="1"/><circle cx="707" cy="754" r="1.800" fill="#e8b83a"/>
<!-- filezilla -->
<rect x="737.500" y="736.500" width="23.500" height="23" fill="#b00505" stroke="#d83030" stroke-width="1" stroke-dasharray="1.500 1"/>
<text x="740.500" y="755" font-family="'Liberation Sans',sans-serif" font-weight="bold" font-style="italic" font-size="17" fill="#fff" textLength="18" lengthAdjust="spacingAndGlyphs">Fz</text>
<!-- edge -->
<path d="M786.500 748.500c.5-7 5-11 10.500-11 6 0 9.500 4.500 9.500 10.500v2h-14c.3 3 2.800 4.600 6 4.600 2.800 0 5-.8 7-2v4.200c-2.200 1.200-5 1.700-8 1.700-6.500 0-10.300-4-10.300-9.500 0-3.700 2-6.800 5.200-8.400-1.600 1.600-2.600 3.500-2.900 5.600h9.500c0-2.800-1.300-4.700-4-4.700-3.500 0-7 2.500-8.500 7z" fill="#1e7ad6"/>
<!-- mail -->
<path d="M831 744.300l12-6.400 12 6.400v12.700h-24z" fill="#fff"/>
<path d="M832.500 744.800h21l-7.800 4.600 4.300 4.800-8.300-5z" fill="#0a0e15"/>
<!-- excel -->
<rect x="878.500" y="736.500" width="21" height="21" rx="1" fill="url(#gXL)" stroke="#2f8a3a" stroke-width="1"/>
<path d="M879.500 737.500h19v5c-8 1.500-14 6-19 13z" fill="#eef8ea" opacity=".7"/>
<text x="880.300" y="751.500" font-family="'Liberation Sans',sans-serif" font-weight="bold" font-size="16" fill="#237a2e" textLength="10.500" lengthAdjust="spacingAndGlyphs">X</text>
<path d="M888.500 748.500l10.800-2.500.7 9.500-10.500 1.700z" fill="#e6f4e0" stroke="#6ab85a" stroke-width=".6"/>
<path d="M889.500 751.500l10-2M890 754.500l10-1.800M894.500 747.300l1 9.300" stroke="#8aca7a" stroke-width=".7"/>
<!-- word (active) -->
<rect x="914" y="728" width="42" height="40" fill="#35383e"/><rect x="957.500" y="728" width="2.500" height="40" fill="#2b2e34"/>
<rect x="924.500" y="736.500" width="21" height="21" rx="1" fill="url(#gWD)" stroke="#2a5db0" stroke-width="1"/>
<text x="925.800" y="752" font-family="'Liberation Sans',sans-serif" font-weight="bold" font-size="16" fill="#1c55b8" textLength="15" lengthAdjust="spacingAndGlyphs">W</text>
<path d="M934.500 750.500l11-2.500 1 7.500-11 2z" fill="#f4f8fd" stroke="#8aaee0" stroke-width=".6"/>
<path d="M936 753.500l9-1.800M936.500 755.500l9-1.600" stroke="#b4c8ea" stroke-width=".7"/>
<rect x="914" y="766" width="46" height="2" fill="#8cc4f0"/>
<!-- chrome -->
<circle cx="984" cy="748" r="11" fill="#e33b2e"/>
<path d="M984 748l-9.500-5.500a11 11 0 0 0 4 15z" fill="#2da94f"/><path d="M984 748l-5.500 9.500a11 11 0 0 0 16.500-9.500z" fill="#fcc934"/>
<path d="M984 748l-5.500 9.500a11 11 0 0 1-4-15z" fill="#2da94f"/>
<circle cx="984" cy="748" r="5" fill="#fff"/><circle cx="984" cy="748" r="3.900" fill="#4a8af4"/>
<rect x="965" y="766" width="37.500" height="2" fill="#8cc4f0"/>
<!-- image file -->
<path d="M1022.500 737.500h12l4 4v16h-16z" fill="#fff" stroke="#c8ccd2" stroke-width=".6"/><path d="M1034.500 737.500v4h4" fill="#dfe3ea"/>
<rect x="1025" y="743.500" width="11" height="10.500" fill="#2a7be0"/><path d="M1025 754l0-5.500 2.200-2.500 2.200 3.500 2-3 4.600 5v2.500z" fill="#fff" opacity=".92"/><path d="M1025 754v-3l11 0v3z" fill="#2a7be0"/>
<rect x="1012.400" y="766" width="37.400" height="2" fill="#8cc4f0"/>
<!-- tray -->
<g stroke="#fff" stroke-width="1.200" fill="none"><circle cx="1090" cy="742.500" r="2.500"/><circle cx="1084" cy="748.800" r="2.300"/><path d="M1087.200 748.200c1-2.800 5.500-2.800 6.500 0M1080.200 755.200c.3-4.500 7.300-4.500 7.600 0"/></g>
<path d="M1117.500 751.300l6-6 6 6" stroke="#fff" stroke-width="1.400" fill="none"/>
<g stroke="#fff" stroke-width="1.200" fill="none"><rect x="1144.500" y="745.500" width="9.500" height="6.500"/><path d="M1154.500 747.500v2.500"/><path d="M1140.500 742.500v3M1143 742.500v3M1139.500 745.500h4.500v2.500c0 1.500-1 2-2.200 2s-2.300-.5-2.300-2zM1141.700 750v2.500h3"/></g>
<rect x="1146" y="747" width="6.500" height="3.500" fill="#fff"/>
<g stroke="#fff" stroke-width="1.300" fill="none"><path d="M1166.500 754.500a12 12 0 0 1 12-12M1169.800 754.500a8.700 8.700 0 0 1 8.700-8.700M1173 754.500a5.500 5.500 0 0 1 5.500-5.500"/></g><circle cx="1177" cy="753.300" r="1.500" fill="#fff"/>
<g stroke="#fff" stroke-width="1.200" fill="none"><path d="M1187.500 745.500h3l4-3.500v12l-4-3.500h-3z"/><path d="M1197 745c1.300 1.700 1.300 4.500 0 6.200M1199.500 743c2.500 3 2.500 7.300 0 10.300M1202 741.300c3.500 4 3.500 9.700 0 13.700"/></g>
<path d="M1325 740.500h16.500v10.500h-10l-3.500 3v-3h-3z" fill="#fff"/><path d="M1328 743.500h10.500M1328 746h10.500M1328 748.500h7" stroke="#0a0e15" stroke-width="1"/>
<circle cx="1340.600" cy="755" r="7.300" fill="#2b2b2b" stroke="#5a5a5a" stroke-width="1"/>
<text x="1337.400" y="759.200" font-family="'Liberation Sans',sans-serif" font-size="11.500" fill="#fff">6</text>
<path d="M1361.500 728v40" stroke="#6a6d72" stroke-width="1"/>
</svg>
<!--/ICONS4-->
<!--ICONS5-->
<svg id="vs" style="left:1349px;top:139px" width="17" height="567" viewBox="1349 139 17 567">
<rect x="1353" y="140" width="9" height="2" fill="#7d8189"/>
<rect x="1349.500" y="144.500" width="16" height="16" fill="#dfe2e8" stroke="#8b9098"/>
<path d="M1351.500 146.500h5.500v5.500h-5.500zM1354 149h9v8h-9z" fill="#f3e1ea" stroke="#6a6e76" stroke-width=".8"/>
<path d="M1356.500 156.500l2-2.800 2 2.800zM1352.800 147.500l1.500 1.800 1.500-1.800zM1358 151v2M1361 151v2" fill="#fff" stroke="#555" stroke-width=".7"/>
<path d="M1353 172l4.500-4.800 4.500 4.800z" fill="#3f4246"/>
<defs><linearGradient id="gTh" x1="0" y1="0" x2="1" y2="0"><stop offset="0" stop-color="#f6f7f9"/><stop offset="1" stop-color="#d6d9e0"/></linearGradient></defs><rect x="1349.500" y="428.500" width="15" height="60" rx="1.500" fill="url(#gTh)" stroke="#7d828a"/>
<path d="M1353 455.500h8M1353 457.500h8M1353 459.500h8M1353 461.500h8" stroke="#8a8e96" stroke-width="1"/>
<path d="M1353 644h9l-4.500 5z" fill="#3f4246"/>
<path d="M1349 654.500h17" stroke="#c3c7ce"/><path d="M1349 655.500h17" stroke="#eceef2"/>
<path d="M1354.400 665.200l3-3 3 3zM1354.400 662.200l3-3 3 3z" fill="#3f4246"/>
<circle cx="1357.300" cy="679.500" r="3.200" fill="#c9ccd2" stroke="#4a4d52" stroke-width="1"/>
<path d="M1354.400 693.800l3 3 3-3zM1354.400 696.800l3 3 3-3z" fill="#3f4246"/>
</svg>
<!--/ICONS5-->
<!--ICONS-->
</div>
</body>
</html>
